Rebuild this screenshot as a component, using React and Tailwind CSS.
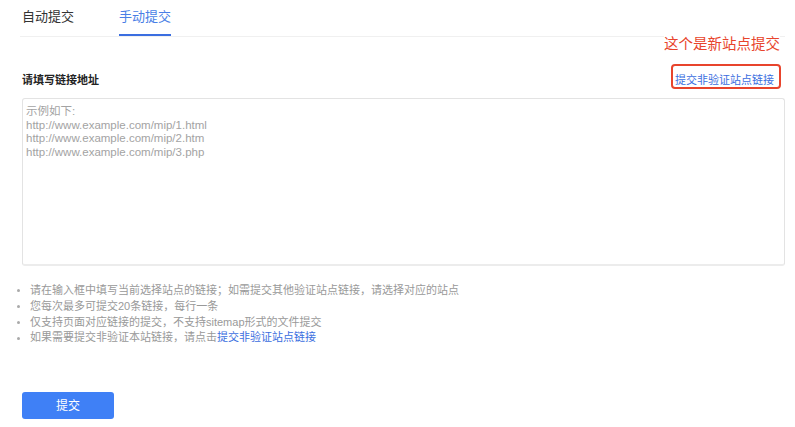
import React from "react";

const tips = [
  "请在输入框中填写当前选择站点的链接；如需提交其他验证站点链接，请选择对应的站点",
  "您每次最多可提交20条链接，每行一条",
  "仅支持页面对应链接的提交，不支持sitemap形式的文件提交",
];

const placeholder =
  "示例如下:\nhttp://www.example.com/mip/1.html\nhttp://www.example.com/mip/2.htm\nhttp://www.example.com/mip/3.php";

const App = () => {
  return (
    <div
      className="relative w-[795px] h-[427px] bg-white overflow-hidden"
      style={{ fontFamily: '"Liberation Sans", "Noto Sans CJK SC", sans-serif' }}
    >
      <div className="pl-[20px] pr-[10px]">
        {/* tabs */}
        <div className="flex h-[37px] border-b border-[#f0f0f0]">
          <div className="pl-[2px] pt-[8px] text-[13px] leading-[18px] text-[#333]">
            自动提交
          </div>
          <div className="ml-[45px] pt-[8px] h-[36px] border-b-2 border-[#3b6ee0] text-[13px] leading-[18px] text-[#4a7fe6]">
            手动提交
          </div>
        </div>

        <div className="flex items-center justify-between pl-[2px] pr-[11px] mt-[35px] h-[16px]">
          <h3 className="text-[11px] font-bold text-[#222]">请填写链接地址</h3>
          <a className="text-[11px] text-[#3b6ee0]">提交非验证站点链接</a>
        </div>

        <textarea
          className="block mt-[10px] ml-[2px] w-[763px] h-[168px] resize-none rounded-[3px] border border-[#e3e3e3] border-b-2 border-b-[#ececec] px-[3px] pt-[6px] pb-[4px] text-[11.5px] leading-[13.5px] outline-none placeholder:text-[#a3a3a3]"
          placeholder={placeholder}
        ></textarea>

        <ul className="mt-[17px] text-[11px] leading-[15.8px] text-[#999]">
          {tips.map((t) => (
            <li key={t} className="flex items-center">
              <span className="ml-[-3px] mr-[10px] w-[3px] h-[3px] rounded-full bg-[#aaa]"></span>
              {t}
            </li>
          ))}
          <li className="flex items-center">
            <span className="ml-[-3px] mr-[10px] w-[3px] h-[3px] rounded-full bg-[#aaa]"></span>
            如果需要提交非验证本站链接，请点击
            <a className="text-[#3b6ee0]">提交非验证站点链接</a>
          </li>
        </ul>

        <button className="mt-[46px] ml-[2px] w-[92px] h-[27px] rounded-[3px] bg-[#3f80f6] text-[12px] text-white">
          提交
        </button>
      </div>

      {/* annotation */}
      <div className="absolute left-[664px] top-[35px] bg-white text-[14.5px] leading-[19px] text-[#e8442c]">
        这个是新站点提交
      </div>
      <div className="absolute left-[671px] top-[64px] w-[110px] h-[25px] rounded-[4px] border-2 border-[#e8442c]"></div>
    </div>
  );
};

export default App;
